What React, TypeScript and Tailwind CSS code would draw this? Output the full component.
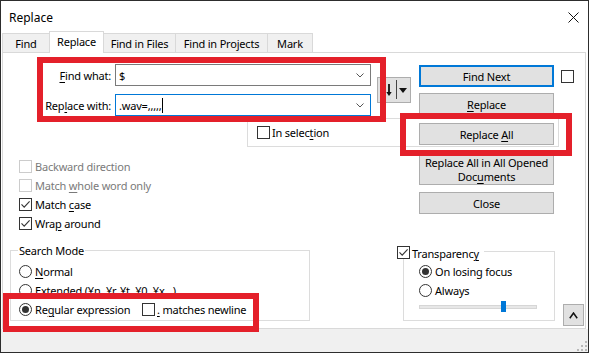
import React from "react";

function Check({ checked = false, disabled = false }: { checked?: boolean; disabled?: boolean }) {
  return (
    <span
      className={
        disabled
          ? "w-[13px] h-[13px] border border-[#cccccc] bg-white shrink-0"
          : "w-[13px] h-[13px] border border-[#333333] bg-white shrink-0 flex items-center justify-center"
      }
    >
      {checked && (
        <svg width="11" height="11" viewBox="0 0 11 11">
          <path d="M1.5 5.3L4.2 8.2L9.6 2.3" fill="none" stroke="#333333" strokeWidth="1.1" />
        </svg>
      )}
    </span>
  );
}

function Radio({ on = false }: { on?: boolean }) {
  return (
    <span className="w-[13px] h-[13px] rounded-full border border-[#333333] bg-white shrink-0 flex items-center justify-center">
      {on && <span className="w-[7px] h-[7px] rounded-full bg-[#333333]" />}
    </span>
  );
}

function U({ children }: { children: React.ReactNode }) {
  return <span className="underline underline-offset-[2px] decoration-1">{children}</span>;
}

function Chev() {
  return (
    <svg width="8" height="5" viewBox="0 0 8 5">
      <path d="M0.5 0.5L4 4L7.5 0.5" fill="none" stroke="#555555" strokeWidth="1" />
    </svg>
  );
}

export default function App() {
  return (
    <div className="w-[589px] h-[353px] bg-white border border-[#2d2d2d] flex flex-col text-[11px] leading-[15px] tracking-[-0.2px] text-black overflow-hidden relative font-['Noto_Sans','Open_Sans',sans-serif]">
      {/* Title bar */}
      <div className="h-[32px] shrink-0 flex items-center justify-between pl-[8px] pr-[9px]">
        <span className="text-[12px] tracking-normal">Replace</span>
        <svg width="11" height="11" viewBox="0 0 11 11">
          <path d="M0.5 0.5L10.5 10.5M10.5 0.5L0.5 10.5" stroke="#111111" strokeWidth="1" />
        </svg>
      </div>

      {/* Tabs */}
      <div className="h-[19px] shrink-0 flex items-start pl-[1px]">
        <div className="w-[47px] h-[19px] border-l border-t border-[#d9d9d9] bg-[#f0f0f0] flex items-center justify-center">
          Find
        </div>
        <div className="w-[55px] h-[22px] -mt-[2px] border-l border-t border-r border-[#d9d9d9] bg-white relative z-10 flex items-center justify-center pb-[2px]">
          Replace
        </div>
        <div className="w-[72px] h-[19px] border-t border-r border-[#d9d9d9] bg-[#f0f0f0] flex items-center justify-center">
          Find in Files
        </div>
        <div className="w-[92px] h-[19px] border-t border-r border-[#d9d9d9] bg-[#f0f0f0] flex items-center justify-center">
          Find in Projects
        </div>
        <div className="w-[45px] h-[19px] border-t border-r border-[#d9d9d9] bg-[#f0f0f0] flex items-center justify-center">
          Mark
        </div>
      </div>

      {/* Panel */}
      <div className="ml-[1px] w-[584px] h-[277px] shrink-0 border border-[#d9d9d9] bg-white flex flex-col">
        {/* Top section */}
        <div className="flex pt-[11px] shrink-0">
          {/* Left column */}
          <div className="w-[416px] shrink-0 flex flex-col">
            <div className="flex items-center">
              <div className="grid grid-cols-[108px_256px] gap-x-[4px] gap-y-[8px] items-center">
                <div className="text-right">
                  <U>F</U>ind what:
                </div>
                <div className="h-[22px] border border-[#7a7a7a] flex items-center justify-between pl-[3px] pr-[6px]">
                  <span>$</span>
                  <Chev />
                </div>
                <div className="text-right">
                  Rep<U>l</U>ace with:
                </div>
                <div className="h-[22px] border border-[#0078d7] flex items-center justify-between pl-[3px] pr-[6px]">
                  <span className="flex items-center">
                    .wav=,,,,,
                    <span className="ml-[1px] w-[1px] h-[15px] bg-black" />
                  </span>
                  <Chev />
                </div>
              </div>
              <div className="ml-[6px] w-[34px] h-[26px] bg-[#e1e1e1] border border-[#adadad] flex items-center">
                <svg width="32" height="24" viewBox="0 0 32 24">
                  <path d="M5 18V7" stroke="#111111" strokeWidth="1.6" />
                  <path d="M2.5 9.5L5 6L7.5 9.5Z" fill="#111111" />
                  <path d="M11 6V16" stroke="#111111" strokeWidth="1.8" />
                  <path d="M8.3 14L11 18L13.7 14Z" fill="#111111" />
                  <path d="M18.5 2V21" stroke="#444444" strokeWidth="1" />
                  <path d="M21 10H29L25 15Z" fill="#111111" />
                </svg>
              </div>
            </div>

            <div className="mt-[2px] ml-[244px] w-[312px] h-[29px] shrink-0 border border-[#dcdcdc] flex items-center gap-[2px] pl-[9px]">
              <Check />
              <span>
                In selec<U>t</U>ion
              </span>
            </div>

            <div className="mt-[10px] pl-[16px] flex flex-col">
              <div className="h-[19px] flex items-center gap-[3px] text-[#7a7a7a]">
                <Check disabled />
                <span>Backward direction</span>
              </div>
              <div className="h-[19px] flex items-center gap-[3px] text-[#7a7a7a]">
                <Check disabled />
                <span>
                  Match <U>w</U>hole word only
                </span>
              </div>
              <div className="h-[19px] flex items-center gap-[3px]">
                <Check checked />
                <span>
                  Match <U>c</U>ase
                </span>
              </div>
              <div className="h-[19px] flex items-center gap-[3px]">
                <Check checked />
                <span>
                  Wra<U>p</U> around
                </span>
              </div>
            </div>
          </div>

          {/* Right column */}
          <div className="flex flex-col pt-[1px]">
            <div className="flex items-center">
              <div className="w-[135px] h-[22px] bg-[#e1e1e1] border-2 border-[#0078d7] flex items-center justify-center">
                Find Next
              </div>
              <div className="ml-[7px]">
                <Check />
              </div>
            </div>
            <div className="mt-[6px] w-[135px] h-[22px] bg-[#e1e1e1] border border-[#adadad] flex items-center justify-center">
              <span>
                <U>R</U>eplace
              </span>
            </div>
            <div className="mt-[8px] w-[135px] h-[22px] bg-[#e1e1e1] border border-[#adadad] flex items-center justify-center">
              <span>
                Replace <U>A</U>ll
              </span>
            </div>
            <div className="mt-[10px] w-[135px] h-[30px] bg-[#e1e1e1] border border-[#adadad] flex flex-col items-center justify-center whitespace-nowrap">
              <span className="leading-[14px]">Replace All in All Opened</span>
              <span className="leading-[14px]">
                Doc<U>u</U>ments
              </span>
            </div>
            <div className="mt-[7px] w-[135px] h-[22px] bg-[#e1e1e1] border border-[#adadad] flex items-center justify-center">
              Close
            </div>
          </div>
        </div>

        {/* Bottom section */}
        <div className="flex items-start shrink-0">
          <fieldset className="ml-[7px] mt-[10px] w-[300px] h-[78px] shrink-0 border border-[#dcdcdc] pl-[8px] pt-[4px]">
            <legend className="px-[1px] -ml-[1px] leading-[15px]">Search Mode</legend>
            <div className="h-[19px] flex items-center gap-[3px]">
              <Radio />
              <span>
                <U>N</U>ormal
              </span>
            </div>
            <div className="h-[19px] flex items-center gap-[3px]">
              <Radio />
              <span>
                <U>E</U>xtended (¥n, ¥r, ¥t, ¥0, ¥x...)
              </span>
            </div>
            <div className="h-[19px] flex items-center">
              <span className="w-[123px] shrink-0 flex items-center gap-[3px]">
                <Radio on />
                <span className="whitespace-nowrap">
                  Re<U>g</U>ular expression
                </span>
              </span>
              <Check />
              <span className="ml-[2px] whitespace-nowrap">
                <U>.</U> matches newline
              </span>
            </div>
          </fieldset>

          <fieldset className="ml-[93px] mt-[13px] w-[152px] h-[75px] shrink-0 border border-[#dcdcdc] pl-[15px] pt-[6px]">
            <legend className="-ml-[22px] h-[10px] flex items-start gap-[2px] pr-[5px] leading-[15px]">
              <Check checked />
              <span className="whitespace-nowrap">
                Transparenc<U>y</U>
              </span>
            </legend>
            <div className="h-[19px] flex items-center gap-[3px]">
              <Radio on />
              <span>On losing focus</span>
            </div>
            <div className="h-[19px] flex items-center gap-[3px]">
              <Radio />
              <span>Always</span>
            </div>
            <div className="mt-[2px] h-[10px] flex items-center">
              <div className="w-[118px] h-[4px] bg-[#e7e7e7] border border-[#d6d6d6] relative">
                <div className="absolute left-[81px] top-[-5px] w-[5px] h-[11px] bg-[#0078d7]" />
              </div>
            </div>
          </fieldset>

          <div className="ml-[8px] mt-[71px] w-[21px] h-[22px] shrink-0 bg-[#e1e1e1] border border-[#adadad] flex items-center justify-center">
            <svg width="9" height="7" viewBox="0 0 9 7">
              <path d="M0.8 6.2L4.5 1L8.2 6.2" fill="none" stroke="#111111" strokeWidth="1.5" />
            </svg>
          </div>
        </div>
      </div>

      {/* Status strip */}
      <div className="flex-1 bg-[#f0f0f0] flex justify-end items-end pr-[1px] pb-[1px]">
        <svg width="10" height="10" viewBox="0 0 10 10">
          <rect x="8" y="0" width="2" height="2" fill="#b8b8b8" />
          <rect x="4" y="4" width="2" height="2" fill="#b8b8b8" />
          <rect x="8" y="4" width="2" height="2" fill="#b8b8b8" />
          <rect x="0" y="8" width="2" height="2" fill="#b8b8b8" />
          <rect x="4" y="8" width="2" height="2" fill="#b8b8b8" />
          <rect x="8" y="8" width="2" height="2" fill="#b8b8b8" />
        </svg>
      </div>

      {/* Red annotation boxes */}
      <div className="absolute left-[36px] top-[56px] w-[349px] h-[65px] border-[6px] border-[#e4202a] pointer-events-none z-20" />
      <div className="absolute left-[399px] top-[112px] w-[172px] h-[43px] border-[6px] border-[#e4202a] pointer-events-none z-20" />
      <div className="absolute left-[2px] top-[292px] w-[256px] h-[39px] border-[6px] border-[#e4202a] pointer-events-none z-20" />
    </div>
  );
}
